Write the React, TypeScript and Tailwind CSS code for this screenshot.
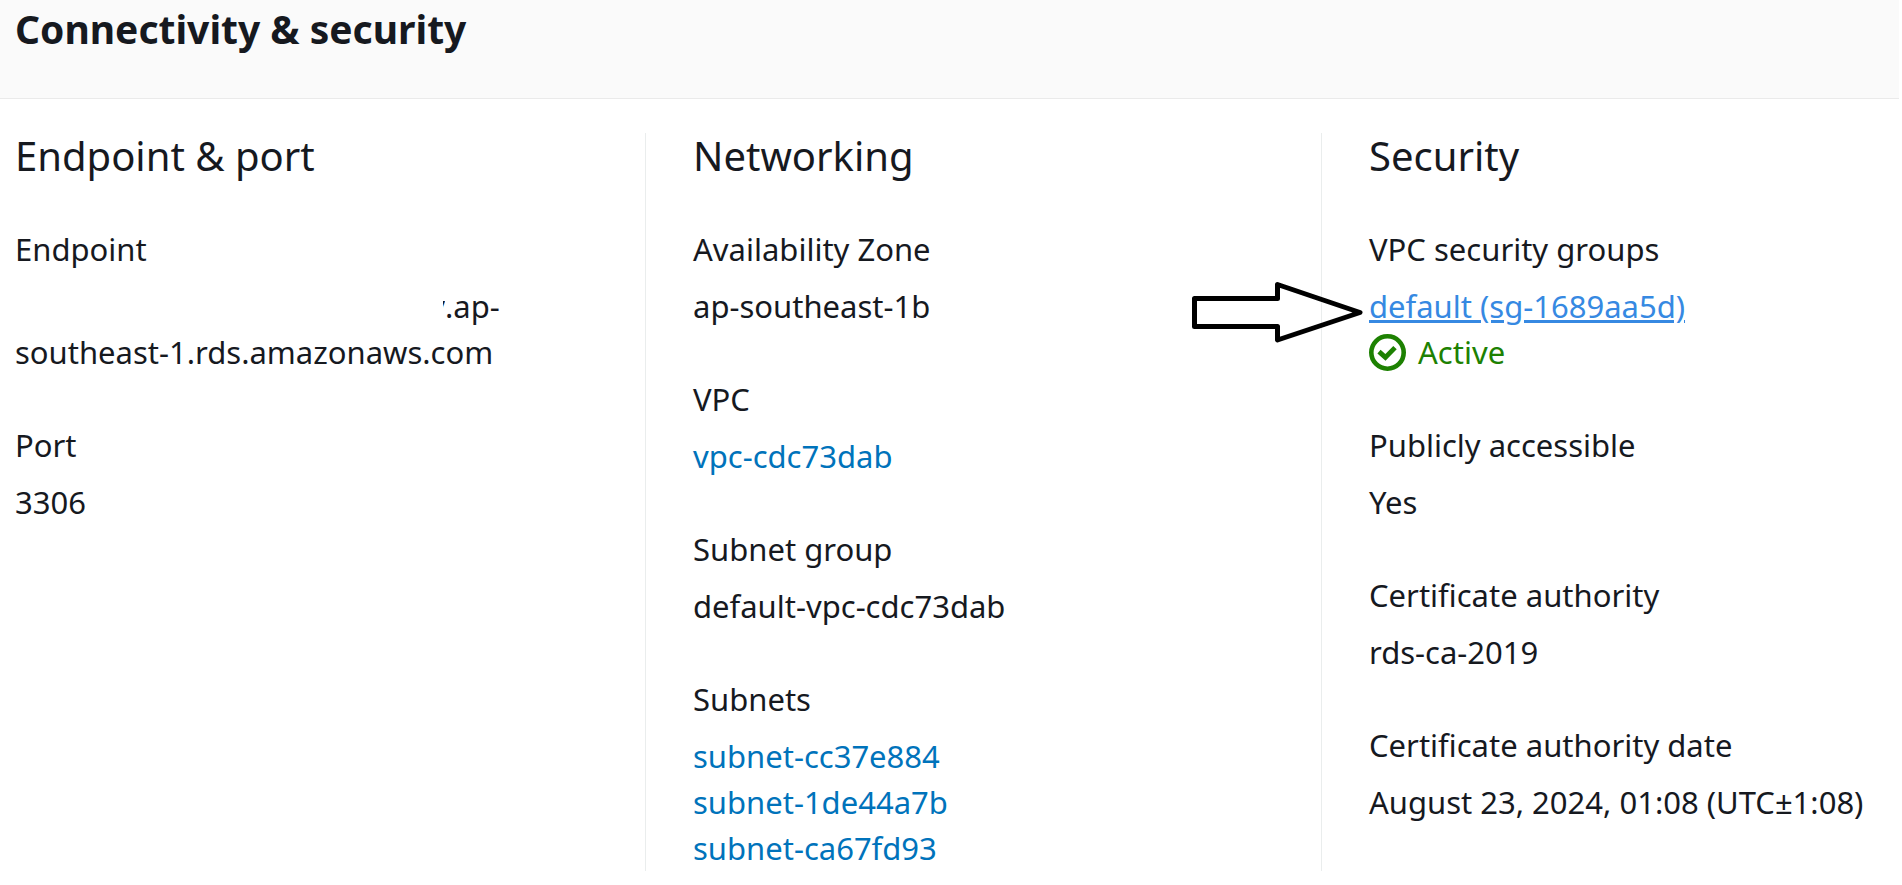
import React from "react";

type FieldProps = { label: string; children: React.ReactNode };

function Field({ label, children }: FieldProps) {
  return (
    <div className="flex flex-col gap-[11px]">
      <dt>{label}</dt>
      <dd>{children}</dd>
    </div>
  );
}

type PanelProps = { title: string; children: React.ReactNode; className?: string };

function Panel({ title, children, className = "" }: PanelProps) {
  return (
    <section className={className}>
      <h2 className="text-[40px] leading-[46px]">{title}</h2>
      <dl className="mt-[47px] flex flex-col gap-[47px]">{children}</dl>
    </section>
  );
}

function ResourceLink({ children }: { children: string }) {
  return (
    <a href="#" className="block w-fit text-[#0073bb] hover:underline">
      {children}
    </a>
  );
}

function StatusCheck() {
  return (
    <svg viewBox="0 0 37 37" className="size-[37px]" fill="none" stroke="currentColor" aria-hidden="true">
      <circle cx="18.5" cy="18.5" r="16.2" strokeWidth="4.6" />
      <path d="M10 17.6 L16.4 23.4 L26 13.6" strokeWidth="4.8" />
    </svg>
  );
}

function PointerArrow() {
  return (
    <svg
      viewBox="0 0 172 62"
      className="absolute top-[-1px] right-full mr-[6px] h-[62px] w-[172px]"
      fill="none"
      stroke="#000"
      strokeWidth="5"
      strokeLinejoin="round"
      aria-hidden="true"
    >
      <path d="M3.5 16.5 H86.5 V2.5 L169 30.5 L86.5 58 V44.5 H3.5 Z" />
    </svg>
  );
}

export default function App() {
  return (
    <main className="bg-white font-['Noto_Sans',sans-serif] text-[31px] leading-[46px] text-[#16191f]">
      <header className="mr-[3px] border-b border-[#eaeaea] bg-[#fafafa] px-[15px] pt-[6px] pb-[46px]">
        <h1 className="text-[39px] leading-[46px] font-bold">Connectivity &amp; security</h1>
      </header>
      <div className="grid grid-cols-[645fr_676fr_581fr] pt-[34px]">
        <Panel title="Endpoint & port" className="pl-[15px]">
          <Field label="Endpoint">
            <span className="flex pl-[428px]">
              <span className="flex w-[2px] justify-end overflow-hidden">y</span>
              .ap-
            </span>
            <span className="block">southeast-1.rds.amazonaws.com</span>
          </Field>
          <Field label="Port">3306</Field>
        </Panel>
        <Panel title="Networking" className="border-l border-[#eaeded] pl-[47px]">
          <Field label="Availability Zone">ap-southeast-1b</Field>
          <Field label="VPC">
            <ResourceLink>vpc-cdc73dab</ResourceLink>
          </Field>
          <Field label="Subnet group">default-vpc-cdc73dab</Field>
          <Field label="Subnets">
            <ResourceLink>subnet-cc37e884</ResourceLink>
            <ResourceLink>subnet-1de44a7b</ResourceLink>
            <ResourceLink>subnet-ca67fd93</ResourceLink>
          </Field>
        </Panel>
        <Panel title="Security" className="border-l border-[#eaeded] pl-[47px]">
          <Field label="VPC security groups">
            <span className="relative block">
              <PointerArrow />
              <a href="#" className="text-[#3689e2] underline decoration-[3px] underline-offset-2">
                default (sg-1689aa5d)
              </a>
            </span>
            <span className="flex items-center gap-3 text-[#1d8102]">
              <StatusCheck />
              Active
            </span>
          </Field>
          <Field label="Publicly accessible">Yes</Field>
          <Field label="Certificate authority">rds-ca-2019</Field>
          <Field label="Certificate authority date">
            <span className="whitespace-nowrap">August 23, 2024, 01:08 (UTC±1:08)</span>
          </Field>
        </Panel>
      </div>
    </main>
  );
}
